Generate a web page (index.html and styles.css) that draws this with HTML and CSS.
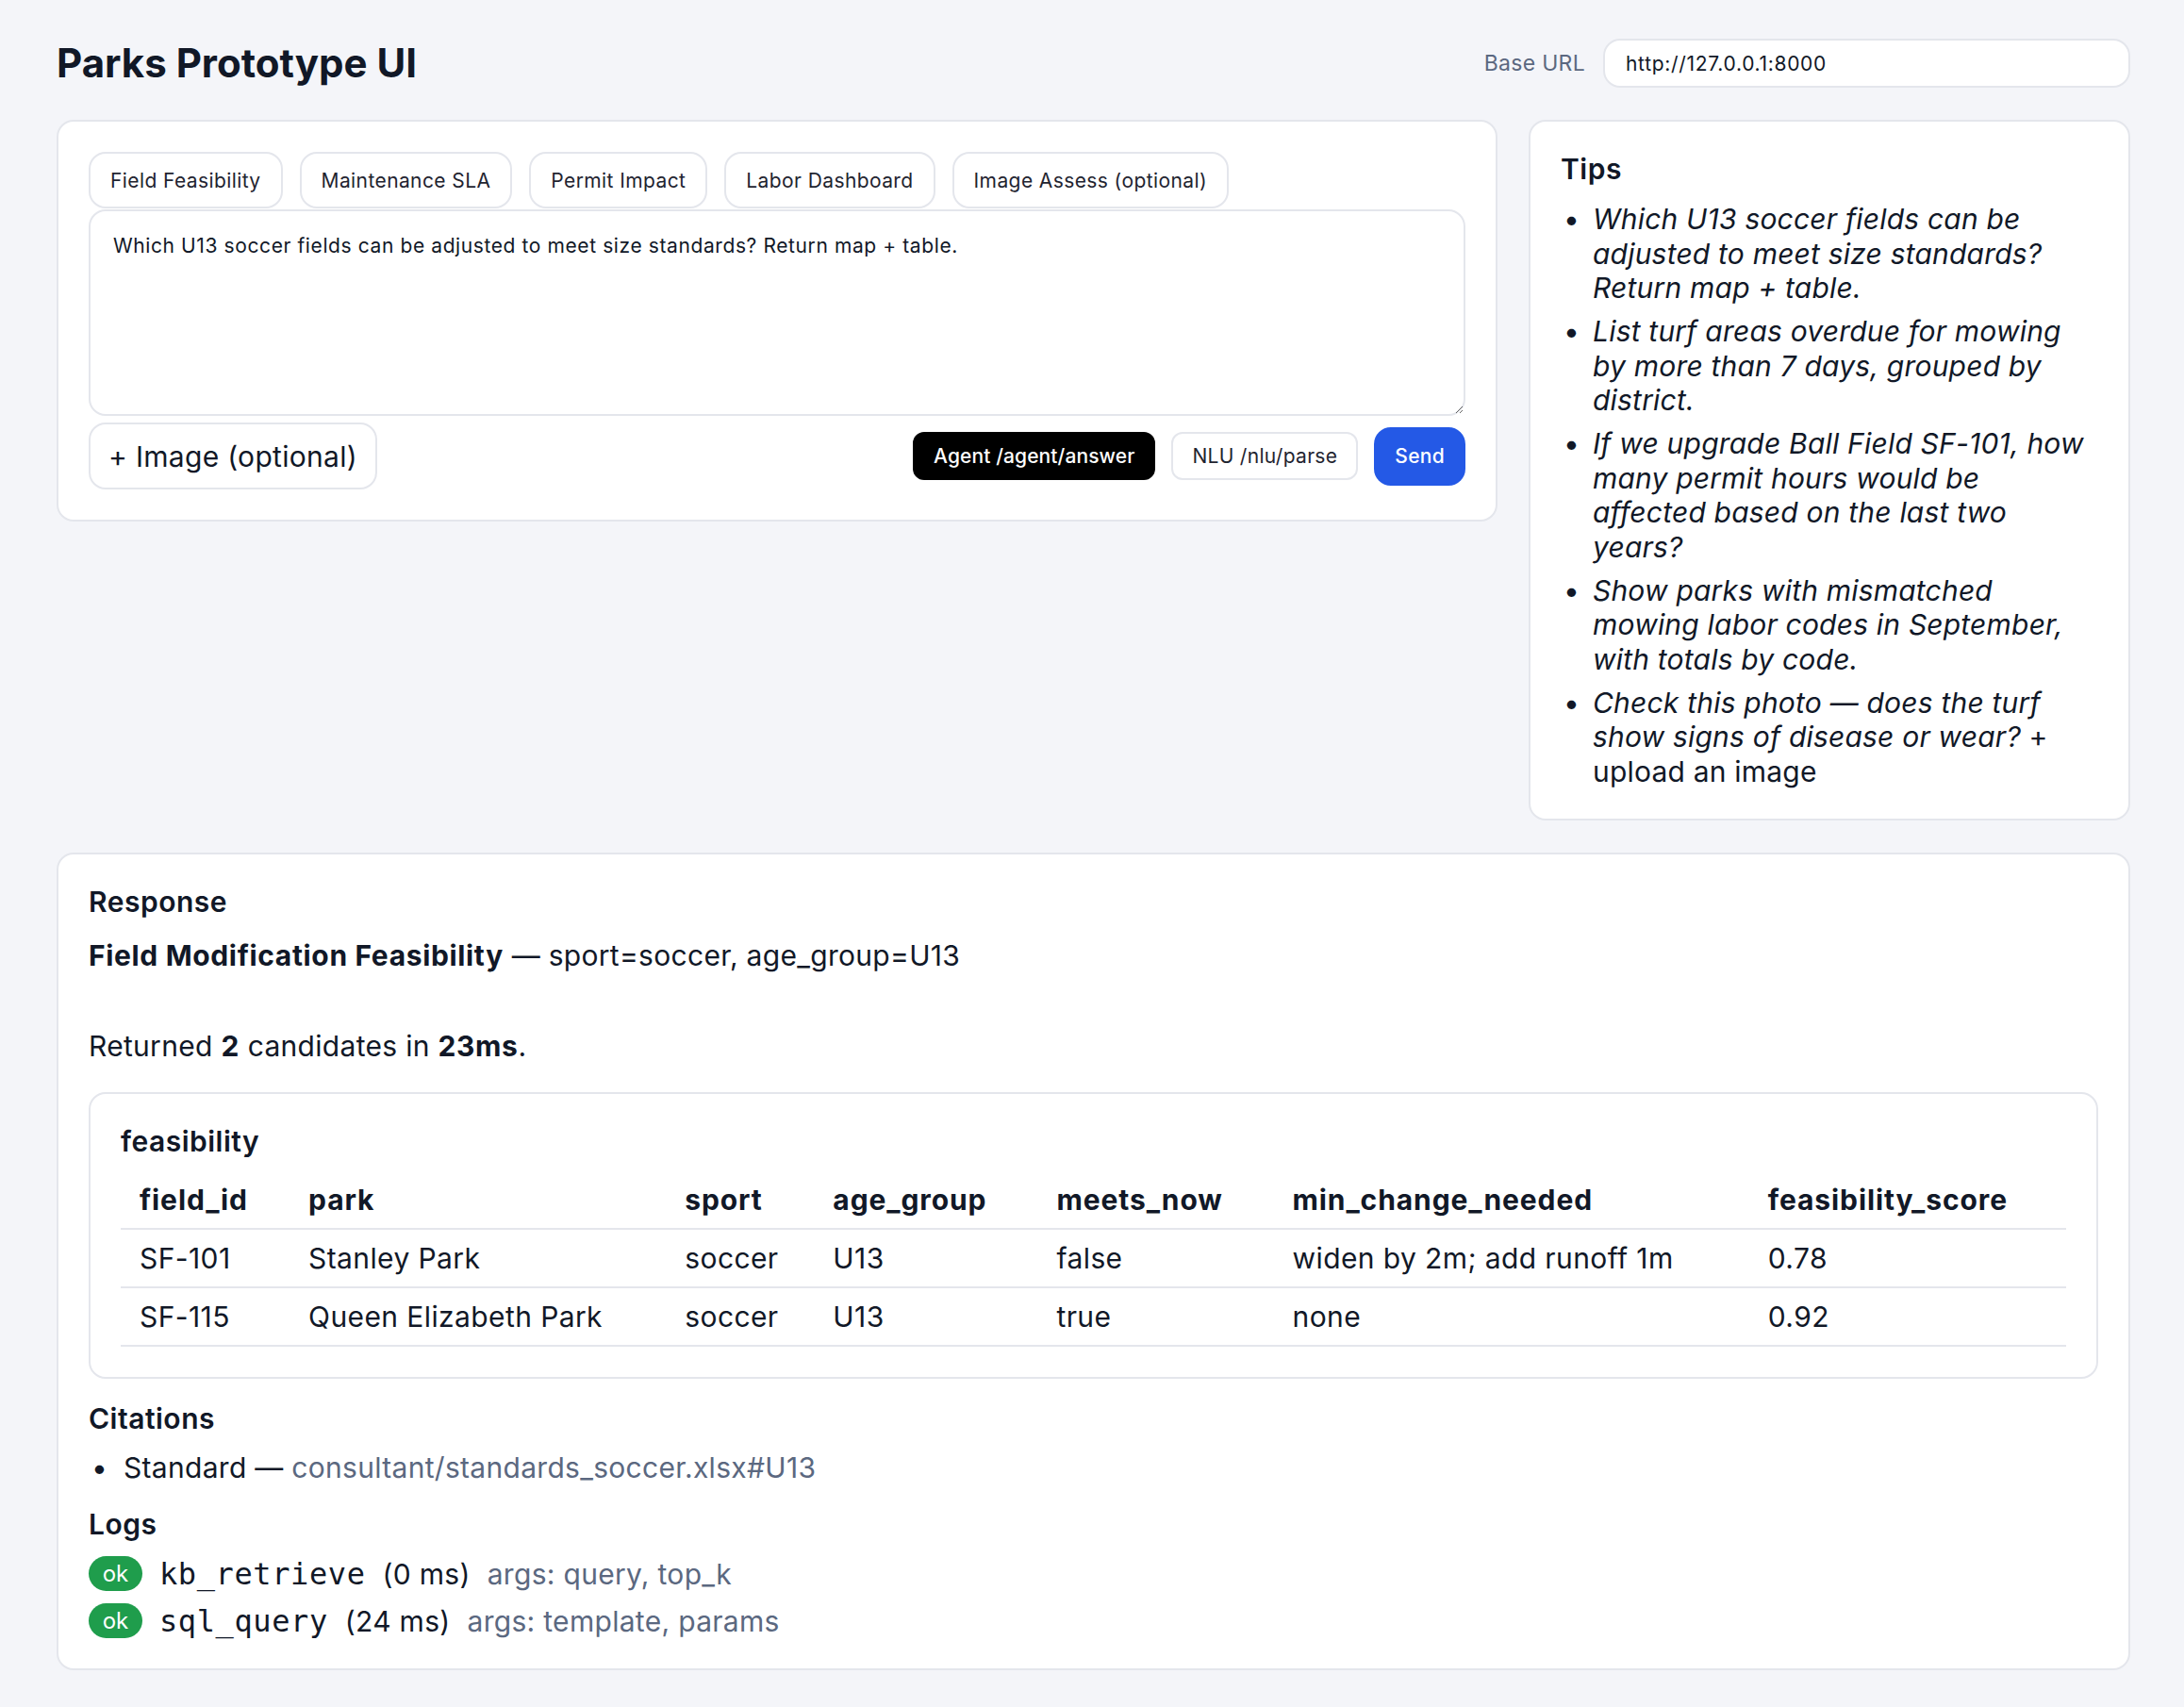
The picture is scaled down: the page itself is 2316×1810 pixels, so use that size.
FILE: index.html
```html
<!DOCTYPE html>
<html lang="en">
<head>
<meta charset="utf-8">
<title>Parks Prototype UI</title>
<link rel="stylesheet" href="styles.css">
</head>
<body>
<div class="page">
  <header class="topbar">
    <h1 class="title">Parks Prototype UI</h1>
    <div class="base">
      <label class="base-label" for="base">Base URL</label>
      <input id="base" class="base-input" type="text" value="http://127.0.0.1:8000">
    </div>
  </header>

  <div class="top-grid">
    <section class="card composer">
      <div class="tabs">
        <button class="tab">Field Feasibility</button>
        <button class="tab">Maintenance SLA</button>
        <button class="tab">Permit Impact</button>
        <button class="tab">Labor Dashboard</button>
        <button class="tab">Image Assess (optional)</button>
      </div>
      <textarea class="prompt">Which U13 soccer fields can be adjusted to meet size standards? Return map + table.</textarea>
      <div class="actions">
        <label class="upload">+ Image (optional)</label>
        <div class="spacer"></div>
        <button class="btn btn-dark">Agent /agent/answer</button>
        <button class="btn btn-light">NLU /nlu/parse</button>
        <button class="btn btn-primary">Send</button>
      </div>
    </section>

    <aside class="card tips">
      <h3 class="heading">Tips</h3>
      <ul class="tips-list">
        <li><em>Which U13 soccer fields can be adjusted to meet size standards? Return map + table.</em></li>
        <li><em>List turf areas overdue for mowing by more than 7 days, grouped by district.</em></li>
        <li><em>If we upgrade Ball Field SF-101, how many permit hours would be affected based on the last two years?</em></li>
        <li><em>Show parks with mismatched mowing labor codes in September, with totals by code.</em></li>
        <li><em>Check this photo — does the turf show signs of disease or wear?</em> + upload an image</li>
      </ul>
    </aside>
  </div>

  <section class="card response">
    <h3 class="heading">Response</h3>
    <p class="summary"><strong>Field Modification Feasibility</strong> — sport=soccer, age_group=U13</p>
    <p class="result">Returned <strong>2</strong> candidates in <strong>23ms</strong>.</p>

    <div class="table-card">
      <h4 class="heading">feasibility</h4>
      <table class="data">
        <colgroup>
          <col class="c1"><col class="c2"><col class="c3"><col class="c4"><col class="c5"><col class="c6"><col class="c7">
        </colgroup>
        <thead>
          <tr><th>field_id</th><th>park</th><th>sport</th><th>age_group</th><th>meets_now</th><th>min_change_needed</th><th>feasibility_score</th></tr>
        </thead>
        <tbody>
          <tr><td>SF-101</td><td>Stanley Park</td><td>soccer</td><td>U13</td><td>false</td><td>widen by 2m; add runoff 1m</td><td>0.78</td></tr>
          <tr><td>SF-115</td><td>Queen Elizabeth Park</td><td>soccer</td><td>U13</td><td>true</td><td>none</td><td>0.92</td></tr>
        </tbody>
      </table>
    </div>

    <h3 class="heading section-gap">Citations</h3>
    <ul class="cites">
      <li>Standard — <a class="muted-link" href="#">consultant/standards_soccer.xlsx#U13</a></li>
    </ul>

    <h3 class="heading section-gap">Logs</h3>
    <div class="logs">
      <div class="log-row"><span class="badge">ok</span><code class="mono">kb_retrieve</code><span>(0 ms)</span><span class="muted">args: query, top_k</span></div>
      <div class="log-row"><span class="badge">ok</span><code class="mono">sql_query</code><span>(24 ms)</span><span class="muted">args: template, params</span></div>
    </div>
  </section>
</div>
</body>
</html>
```

FILE: styles.css
```css
* { box-sizing: border-box; }

html, body {
  margin: 0;
  padding: 0;
  background: #f4f5f9;
}

body {
  font-family: Inter, "Noto Sans", "Liberation Sans", sans-serif;
  color: #111827;
  font-size: 30px;
  line-height: 36px;
  letter-spacing: 0.3px;
}

.page {
  padding: 41px 57px 40px 60px;
}

.topbar {
  display: flex;
  align-items: center;
  justify-content: space-between;
  height: 52px;
}

.title {
  margin: 0;
  font-size: 42px;
  line-height: 50px;
  font-weight: 700;
  letter-spacing: 0;
}

.base {
  display: flex;
  align-items: center;
  gap: 19px;
}

.base-label {
  font-size: 23px;
  color: #5b6880;
  letter-spacing: 0.3px;
}

.base-input {
  width: 559px;
  height: 52px;
  border: 2px solid #e4e6ec;
  border-radius: 18px;
  background: #fff;
  padding: 0 22px;
  font-family: Inter, "Noto Sans", sans-serif;
  font-size: 21px;
  letter-spacing: 0.7px;
  color: #111827;
  outline: none;
}

.top-grid {
  display: grid;
  grid-template-columns: 1fr 638px;
  gap: 33px;
  align-items: start;
  margin-top: 34px;
}

.card {
  background: #fff;
  border: 2px solid #e4e6ec;
  border-radius: 18px;
  padding: 32px;
}

.tabs {
  display: flex;
  gap: 18px;
}

.tab {
  height: 60px;
  padding: 0 21px;
  border: 2px solid #e4e6ec;
  border-radius: 18px;
  background: #fff;
  font-family: Inter, "Noto Sans", sans-serif;
  font-size: 21px;
  letter-spacing: 0.4px;
  color: #1f2430;
}

.prompt {
  display: block;
  width: 100%;
  height: 219px;
  margin-top: 1px;
  padding: 22px 24px;
  border: 2px solid #e4e6ec;
  border-radius: 18px;
  font-family: Inter, "Noto Sans", sans-serif;
  font-size: 21px;
  line-height: 30px;
  letter-spacing: 0.6px;
  color: #111827;
  resize: vertical;
  outline: none;
}

.actions {
  display: flex;
  align-items: center;
  gap: 17px;
  margin-top: 7px;
}

.upload {
  display: inline-flex;
  align-items: center;
  height: 71px;
  padding: 0 19px;
  border: 2px solid #e4e6ec;
  border-radius: 18px;
  background: #fff;
  font-size: 30px;
  letter-spacing: 0.3px;
}

.spacer { flex: 1; }

.btn {
  font-family: Inter, "Noto Sans", sans-serif;
  font-size: 21px;
  letter-spacing: 0.3px;
  height: 51px;
  padding: 0 20px;
  border-radius: 12px;
  border: 2px solid #e4e6ec;
  background: #fff;
  color: #1f2430;
}

.btn-dark {
  background: #000;
  border-color: #000;
  color: #fff;
  font-weight: 500;
  letter-spacing: 0.1px;
}

.btn-primary {
  height: 62px;
  padding: 0 20px;
  border-radius: 18px;
  background: #2459e6;
  border-color: #2459e6;
  color: #fff;
  font-weight: 500;
  font-size: 21px;
}

.heading {
  margin: 0;
  font-size: 30px;
  line-height: 36px;
  font-weight: 600;
  letter-spacing: 0.5px;
}

.tips-list {
  margin: 17px 0 0;
  padding: 0 10px 0 34px;
  list-style: none;
  letter-spacing: 0.2px;
}

.tips-list li {
  position: relative;
  margin-top: 9.5px;
  line-height: 36.5px;
}

.tips-list li:first-child { margin-top: 0; }

.tips-list li::before,
.cites li::before {
  content: "•";
  position: absolute;
  left: -31px;
  top: 0;
  font-style: normal;
}

.response {
  margin-top: 34px;
}

.summary {
  margin: 21px 0 0;
}

.summary strong,
.result strong {
  font-weight: 700;
  letter-spacing: 0.65px;
}

.result {
  margin: 60px 0 0;
}

.table-card {
  margin-top: 31px;
  border: 2px solid #e4e6ec;
  border-radius: 18px;
  padding: 32px;
}

.data {
  width: 100%;
  margin-top: 14px;
  border-collapse: collapse;
  table-layout: fixed;
}

.c1 { width: 179px; }
.c2 { width: 399px; }
.c3 { width: 157px; }
.c4 { width: 237px; }
.c5 { width: 250px; }
.c6 { width: 504px; }
.c7 { width: 336px; }

.data th,
.data td {
  text-align: left;
  padding: 12px 20px;
  border-bottom: 2px solid #e4e6ec;
  white-space: nowrap;
}

.data th {
  font-weight: 700;
  letter-spacing: 0.9px;
}

.data td { letter-spacing: 0.4px; }

.section-gap { margin-top: 24px; }

.cites {
  margin: 16px 0 0;
  padding-left: 37px;
  list-style: none;
}

.cites li { position: relative; }

.cites li::before { left: -34px; }

.muted-link {
  color: #5b6880;
  text-decoration: none;
}

.muted { color: #5b6880; }

.logs {
  display: flex;
  flex-direction: column;
  gap: 13px;
  margin-top: 16px;
}

.log-row {
  display: flex;
  align-items: center;
  gap: 18px;
  height: 37px;
}

.badge {
  display: inline-flex;
  align-items: center;
  justify-content: center;
  width: 57px;
  height: 37px;
  border-radius: 999px;
  background: #1f9d4c;
  color: #fff;
  font-size: 24px;
  letter-spacing: 0;
}

.mono {
  font-family: "DejaVu Sans Mono", "Liberation Mono", monospace;
  font-size: 32px;
  letter-spacing: 0.6px;
}
```
